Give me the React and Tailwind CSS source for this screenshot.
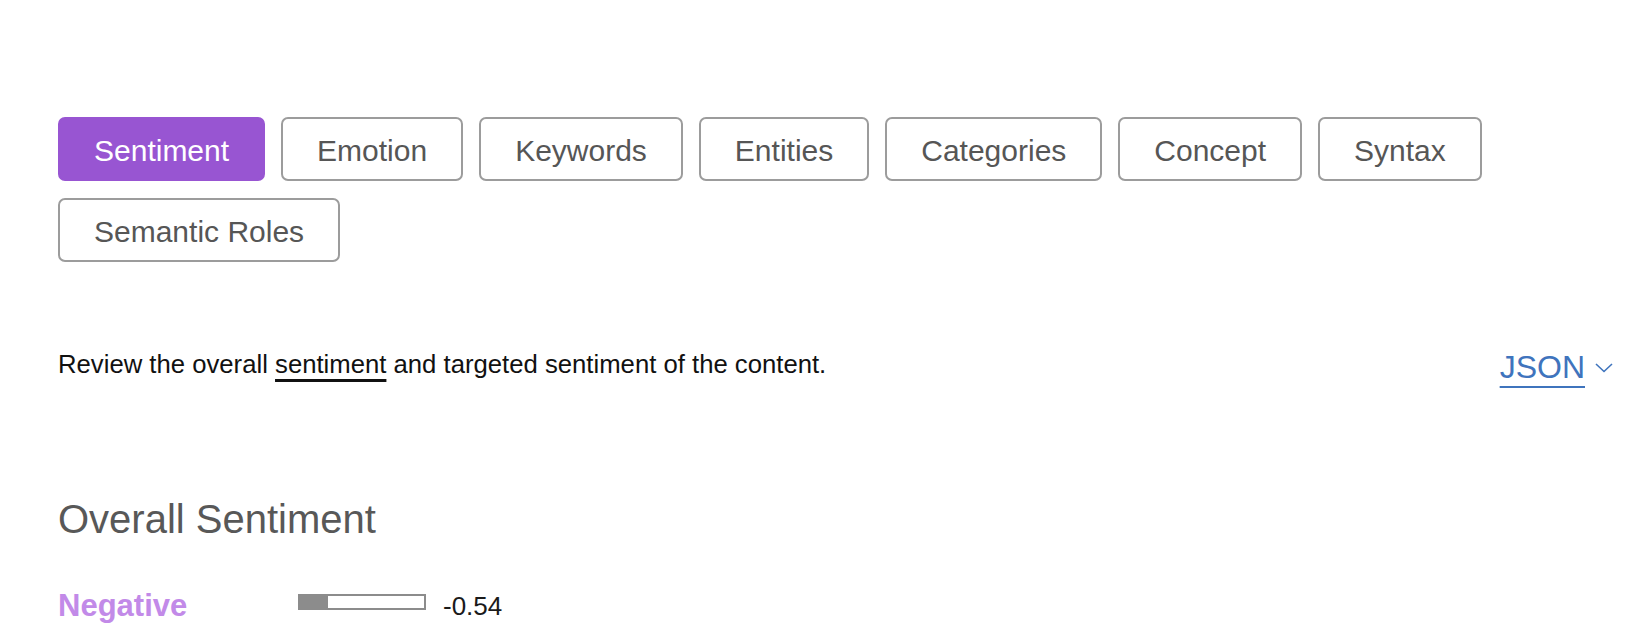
import { useState } from 'react';

const tabs = ["Sentiment", "Emotion", "Keywords", "Entities", "Categories", "Concept", "Syntax", "Semantic Roles"];

function App() {
    const [active, setActive] = useState("Sentiment");

    return (
        <div className="min-h-screen bg-white pl-[58px] pr-[31px] pt-[117px] font-['Liberation_Sans',Arial,sans-serif]">
            {/* Tab buttons */}
            <div className="flex flex-wrap gap-x-[16px] gap-y-[17px]">
                {tabs.map((tab) => (
                    <button
                        key={tab}
                        onClick={() => setActive(tab)}
                        className={`flex h-[64px] items-center rounded-[7px] border-2 px-[34px] pt-[3px] text-[30px] leading-[34px] ${
                            active === tab
                                ? "border-[#9855d2] bg-[#9855d2] text-white"
                                : "border-[#9c9c9c] bg-white text-[#565656]"
                        }`}
                    >
                        {tab}
                    </button>
                ))}
            </div>

            {/* Description + JSON toggle */}
            <div className="mt-[88px] flex items-start justify-between">
                <p className="text-[25.7px] leading-[28px] text-[#111]">
                    Review the overall{" "}
                    <span className="underline decoration-[#111] decoration-[3px] underline-offset-[6px]">sentiment</span>{" "}
                    and targeted sentiment of the content.
                </p>
                <button className="flex items-center gap-[10px] text-[32px] leading-[34px] text-[#3f74bd]">
                    <span className="underline decoration-2 underline-offset-[8px]">JSON</span>
                    <svg width="18" height="10" viewBox="0 0 18 10" className="mt-[2px]" fill="none">
                        <polyline points="1,1 9,8.5 17,1" stroke="#3f74bd" strokeWidth="1.6" />
                    </svg>
                </button>
            </div>

            {/* Overall sentiment */}
            <h2 className="mt-[112px] text-[40px] leading-[46px] text-[#585858]">Overall Sentiment</h2>
            <div className="mt-[47px] flex items-start">
                <span className="w-[240px] text-[31px] font-bold leading-[34px] text-[#c28ae8]">Negative</span>
                <div className="mt-[5px] flex h-[16px] w-[128px] border-2 border-[#8c8c8c] bg-white">
                    <div className="h-full w-[28px] bg-[#8c8c8c]"></div>
                </div>
                <span className="ml-[17px] mt-[2px] text-[26px] leading-[30px] text-[#1a1a1a]">-0.54</span>
            </div>
        </div>
    );
}

export default App;
